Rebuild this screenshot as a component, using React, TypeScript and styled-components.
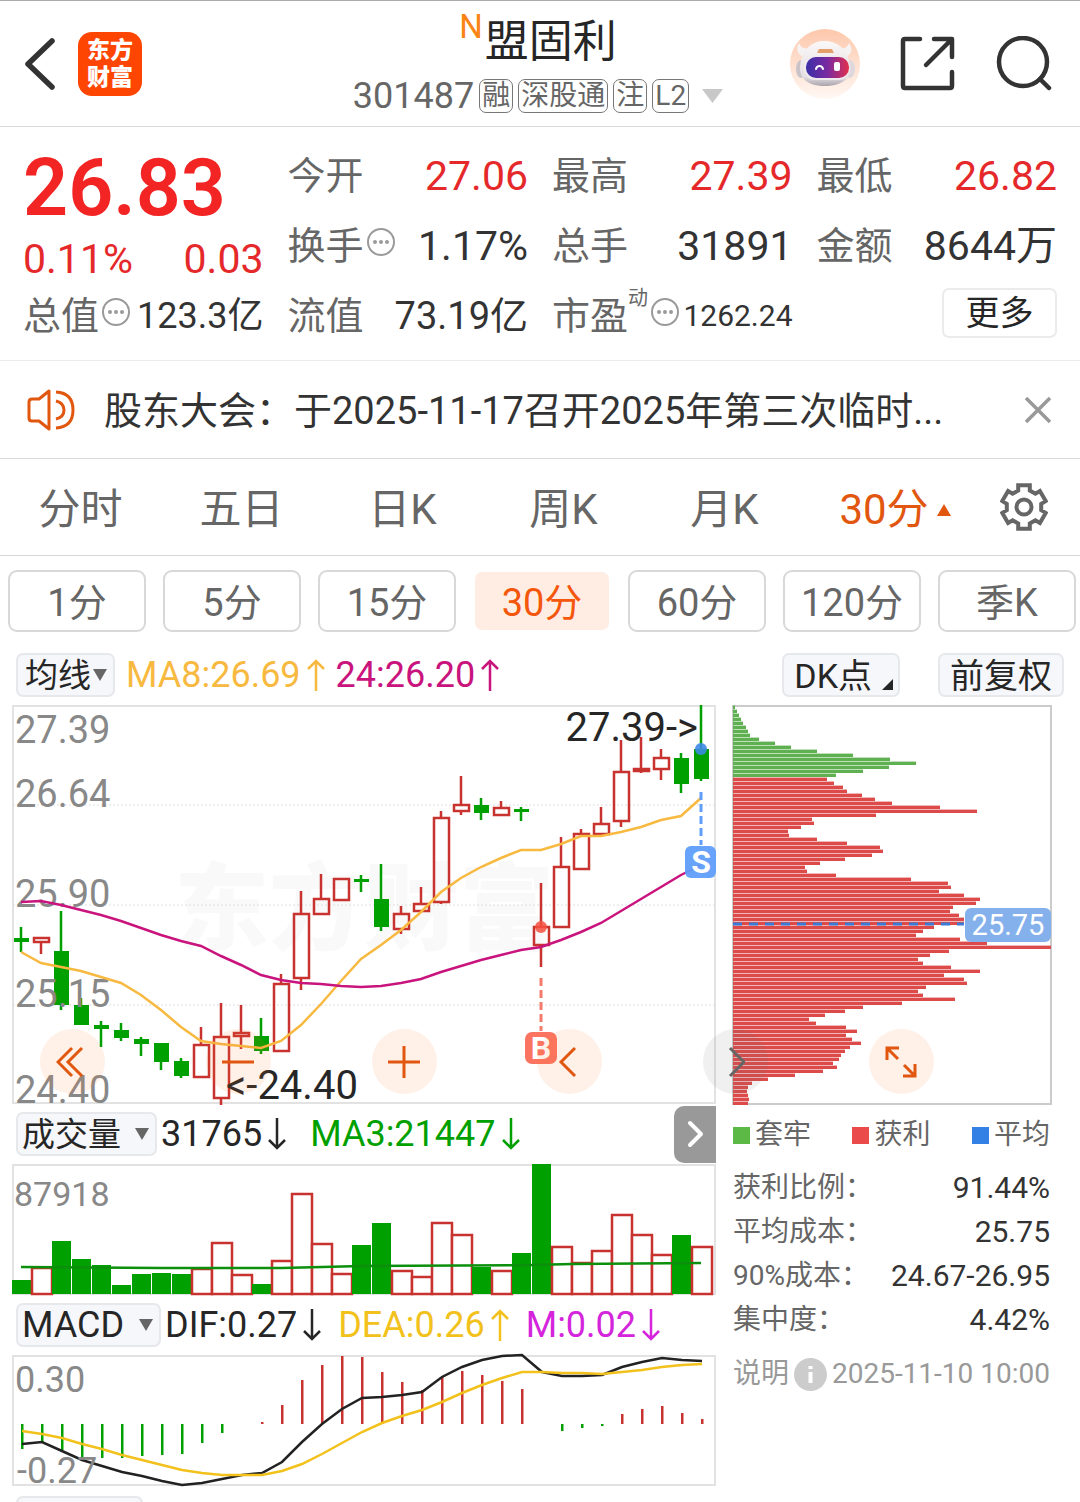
import React from "react";
import styled, { createGlobalStyle } from "styled-components";

const FONT = `Roboto, "Noto Sans CJK SC", sans-serif`;
const C = {
  ink: "#262626",
  text: "#333333",
  sub: "#666666",
  mute: "#999999",
  red: "#e5292b",
  orange: "#e2570f",
  up: "#c8322f",
  down: "#00a000",
  ma8: "#f8b941",
  ma24: "#c9137d",
  dea: "#f2c11c",
  macd: "#d424dc",
  frame: "#e2e2e2",
};

const GlobalStyle = createGlobalStyle`
  * { box-sizing: border-box; }
  body { margin: 0; background: #fff; font-family: ${FONT}; color: ${C.text}; }
  button, select { font: inherit; color: inherit; background: none; border: 0; padding: 0; margin: 0; cursor: pointer; }
  svg { display: block; flex: none; }
  h1, p, dl, dd, dt { margin: 0; font-weight: 400; }
`;

/* ---------- header ---------- */

const Header = styled.header`
  display: grid;
  grid-template-columns: 1fr auto 1fr;
  align-items: center;
  height: 127px;
  padding: 0 28px 0 24px;
  border-top: 1px solid #aaa;
  border-bottom: 1px solid #dadada;
`;
const HeaderSide = styled.div<{ $end?: boolean }>`
  display: flex;
  align-items: center;
  justify-content: ${(p) => (p.$end ? "flex-end" : "flex-start")};
  gap: ${(p) => (p.$end ? 40 : 22)}px;
`;
const IconButton = styled.button`
  display: flex;
  align-items: center;
  justify-content: center;
`;
const Logo = styled.a`
  display: grid;
  place-content: center;
  width: 64px;
  height: 64px;
  border-radius: 14px;
  background: #ff4502;
  color: #fff;
  font-size: 23px;
  font-weight: 900;
  line-height: 27px;
  text-decoration: none;
`;
const TitleBlock = styled.div`
  display: flex;
  flex-direction: column;
  align-items: center;
  padding-top: 8px;
`;
const StockName = styled.h1`
  display: flex;
  align-items: flex-start;
  gap: 2px;
  font-size: 44px;
  line-height: 56px;
  color: ${C.ink};
`;
const NewMark = styled.span`
  font-size: 33px;
  line-height: 26px;
  color: #fa8414;
`;
const CodeRow = styled.div`
  display: flex;
  align-items: center;
  gap: 5px;
  font-size: 36px;
  line-height: 52px;
  color: ${C.sub};
`;
const Tag = styled.span`
  padding: 0 2px;
  border: 1px solid #777;
  border-radius: 7px;
  font-size: 28px;
  line-height: 32px;
`;
const ExpandButton = styled(IconButton)`
  padding-left: 8px;
`;

/* ---------- quote ---------- */

const Quote = styled.section`
  display: grid;
  grid-template-columns: repeat(4, 1fr);
  grid-auto-rows: 70px;
  column-gap: 24px;
  padding: 14px 23px 9px;
  border-bottom: 1px solid #ececec;
`;
const PriceCell = styled.div`
  grid-row: span 2;
  padding-top: 1px;
  color: ${C.red};
`;
const Price = styled.div`
  font-size: 79px;
  font-weight: 600;
  line-height: 93px;
  color: #f22424;
`;
const Change = styled.div`
  display: flex;
  justify-content: space-between;
  font-size: 41px;
  line-height: 48px;
`;
const Field = styled.div`
  display: flex;
  align-items: center;
  justify-content: space-between;
  white-space: nowrap;
`;
const FieldLabel = styled.span`
  display: flex;
  align-items: center;
  font-size: 38px;
  line-height: 50px;
  color: ${C.sub};
`;
const Sup = styled.sup`
  align-self: flex-start;
  font-size: 20px;
  line-height: 14px;
`;
const FieldValue = styled.span<{ $red?: boolean; $size?: number }>`
  font-size: ${(p) => p.$size ?? 41}px;
  line-height: 50px;
  color: ${(p) => (p.$red ? C.red : C.text)};
`;
const MoreButton = styled.button`
  margin: 0 0 6px auto;
  width: 115px;
  height: 50px;
  border: 2px solid #eaebec;
  border-radius: 7px;
  font-size: 34px;
  line-height: 46px;
  color: ${C.ink};
`;

/* ---------- notice ---------- */

const Notice = styled.section`
  display: flex;
  align-items: center;
  height: 98px;
  padding: 0 28px 0 26px;
  border-bottom: 1px solid #dadada;
`;
const NoticeText = styled.p`
  flex: 1;
  min-width: 0;
  margin: 0 60px 0 28px;
  padding-top: 2px;
  overflow: hidden;
  white-space: nowrap;
  font-size: 38px;
  line-height: 50px;
`;

/* ---------- tabs ---------- */

const Tabs = styled.nav`
  display: grid;
  grid-template-columns: repeat(5, 161fr) 180fr 95fr;
  align-items: center;
  height: 97px;
  border-bottom: 1px solid #d6d6d6;
`;
const Tab = styled.button<{ $active?: boolean }>`
  display: flex;
  align-items: center;
  justify-content: center;
  gap: 8px;
  padding-top: 5px;
  font-size: 42px;
  line-height: 60px;
  color: ${(p) => (p.$active ? C.orange : C.sub)};
`;
const SettingsButton = styled(IconButton)`
  padding-right: 18px;
`;
const Periods = styled.div`
  display: grid;
  grid-template-columns: repeat(7, 1fr);
  gap: 17px;
  padding: 14px 4px 0 8px;
`;
const Period = styled.button<{ $active?: boolean }>`
  height: 62px;
  padding-top: 4px;
  border: 2px solid ${(p) => (p.$active ? "transparent" : "#d8d8d8")};
  border-radius: 9px;
  background: ${(p) => (p.$active ? "#ffede4" : "#fff")};
  background-clip: padding-box;
  font-size: 38px;
  line-height: 54px;
  color: ${(p) => (p.$active ? "#f4570b" : C.sub)};
`;

/* ---------- indicator bars ---------- */

const Toolbar = styled.div`
  display: flex;
  align-items: center;
  gap: 11px;
  height: 73px;
  padding: 13px 16px 0;
`;
const Spacer = styled.div`
  flex: 1;
`;
const Pill = styled.label<{ $gap?: number; $pad?: number }>`
  display: flex;
  align-items: center;
  gap: ${(p) => p.$gap ?? 2}px;
  height: 44px;
  padding: 0 6px 0 ${(p) => p.$pad ?? 4}px;
  border: 2px solid #e6e8eb;
  border-radius: 7px;
  background: #f6f7fa;
  color: ${C.ink};
`;
const PillSelect = styled.select<{ $latin?: boolean }>`
  appearance: none;
  outline: none;
  padding-top: ${(p) => (p.$latin ? 0 : 2)}px;
  font-size: ${(p) => (p.$latin ? 36 : 33)}px;
  line-height: 40px;
`;
const PillButton = styled.button<{ $corner?: boolean }>`
  display: flex;
  align-items: flex-end;
  gap: 10px;
  height: 44px;
  margin-left: 27px;
  padding: 0 ${(p) => (p.$corner ? 5 : 10)}px 0 10px;
  border: 2px solid #e6e8eb;
  border-radius: 7px;
  background: #f6f7fa;
  font-size: 34px;
  line-height: 38px;
  color: ${C.ink};
`;
const Corner = styled.span`
  margin-bottom: 5px;
  border-bottom: 11px solid ${C.ink};
  border-left: 11px solid transparent;
`;
const Reading = styled.span<{ $color: string }>`
  display: flex;
  align-items: center;
  gap: 6px;
  font-size: 36px;
  line-height: 44px;
  white-space: nowrap;
  color: ${(p) => p.$color};
`;
const PaneHeader = styled.div`
  display: flex;
  align-items: center;
  gap: 4px;
  height: 60px;
  padding-left: 4px;
`;
const Readings = styled.div<{ $gap: number }>`
  display: flex;
  flex: 1;
  gap: ${(p) => p.$gap}px;
`;
const CollapseButton = styled.button`
  display: flex;
  align-items: center;
  justify-content: center;
  width: 42px;
  height: 57px;
  border-radius: 10px 0 0 10px;
  background: #999;
`;

/* ---------- charts ---------- */

const ChartGrid = styled.section`
  position: relative;
  display: grid;
  grid-template-columns: 11fr 5fr;
  column-gap: 16px;
  padding: 0 28px 0 12px;
`;
const ChartSvg = styled.svg`
  width: 100%;
  height: auto;
  overflow: visible;
  font-family: ${FONT};
`;
const Floating = styled.div`
  position: absolute;
  right: 146px;
  bottom: 10px;
  left: 40px;
  display: flex;
  justify-content: space-between;
`;
const RoundButton = styled.button<{ $gray?: boolean }>`
  display: flex;
  align-items: center;
  justify-content: center;
  width: 65px;
  height: 65px;
  border-radius: 50%;
  background: ${(p) => (p.$gray ? "rgba(120,120,120,.11)" : "rgba(255,120,50,.11)")};
`;
const NextPane = styled.div`
  height: 16px;
  padding: 10px 0 0 4px;
  overflow: hidden;
`;
const NextPill = styled.div`
  width: 127px;
  height: 44px;
  border: 2px solid #e6e8eb;
  border-radius: 7px;
  background: #f6f7fa;
`;

/* ---------- cost statistics ---------- */

const Stats = styled.aside`
  padding: 13px 2px 0 1px;
`;
const Legend = styled.div`
  display: flex;
  justify-content: space-between;
  margin-bottom: 13px;
  font-size: 28px;
  line-height: 36px;
  color: ${C.sub};
`;
const LegendItem = styled.span<{ $color: string }>`
  display: flex;
  align-items: center;
  gap: 5px;
  &::before {
    content: "";
    width: 17px;
    height: 17px;
    background: ${(p) => p.$color};
  }
`;
const StatRow = styled.div`
  display: flex;
  justify-content: space-between;
  line-height: 44px;
  white-space: nowrap;
`;
const StatName = styled.dt`
  font-size: 28px;
  color: ${C.sub};
`;
const StatValue = styled.dd`
  font-size: 30px;
  color: ${C.text};
`;
const Note = styled.div`
  display: flex;
  align-items: center;
  justify-content: space-between;
  margin-top: 10px;
  font-size: 28px;
  line-height: 44px;
  white-space: nowrap;
  color: ${C.mute};
`;
const NoteHelp = styled.button`
  display: flex;
  align-items: center;
  gap: 5px;
`;

/* ---------- icons ---------- */

const MoreDots = () => (
  <svg width="32" height="42" viewBox="0 0 32 42">
    <circle cx="17" cy="17" r="13" fill="none" stroke="#9a9a9a" strokeWidth="2" />
    {[11, 17, 23].map((x) => (
      <circle key={x} cx={x} cy="17" r="2" fill="#9a9a9a" />
    ))}
  </svg>
);
const Caret = ({ up, w = 14, h = 12, color = "#666" }: { up?: boolean; w?: number; h?: number; color?: string }) => (
  <svg width={w} height={h} viewBox="0 0 14 12" preserveAspectRatio="none">
    <path d={up ? "M0 12L7 0L14 12Z" : "M0 0H14L7 12Z"} fill={color} />
  </svg>
);
const Arrow = ({ down }: { down?: boolean }) => (
  <svg width="18" height="32" viewBox="0 0 18 32" fill="none" stroke="currentColor" strokeWidth="2.5">
    <path d={down ? "M9 0V30M1 22L9 30L17 22" : "M9 32V2M1 10L9 2L17 10"} />
  </svg>
);
const Robot = () => (
  <svg width="70" height="70" viewBox="0 0 70 70">
    <defs>
      <linearGradient id="halo" x1="0" y1="0" x2="0" y2="1">
        <stop offset="0" stopColor="#fdc7ab" />
        <stop offset="1" stopColor="#fff8f4" />
      </linearGradient>
      <linearGradient id="visor" x1="0" y1="0" x2="1" y2="0">
        <stop offset="0" stopColor="#3a2fa8" />
        <stop offset=".5" stopColor="#7a2aa0" />
        <stop offset="1" stopColor="#e2304e" />
      </linearGradient>
      <linearGradient id="shell" x1="0" y1="0" x2="0" y2="1">
        <stop offset="0" stopColor="#fbf8f8" />
        <stop offset=".8" stopColor="#e4dee2" />
        <stop offset="1" stopColor="#a9a3ad" />
      </linearGradient>
    </defs>
    <circle cx="35" cy="35" r="35" fill="url(#halo)" />
    <path d="M9 14C5 20 8 27 15 28L23 18C15 21 11 19 9 14ZM59 14C64 20 61 27 54 28L46 18C54 21 57 19 59 14Z" fill="#f7f2f2" />
    <ellipse cx="11" cy="40" rx="5" ry="9" fill="#c9c3c8" />
    <ellipse cx="60" cy="40" rx="5" ry="9" fill="#ded8dc" />
    <path d="M34 12C48 12 56 20 59 32C64 47 54 57 35 57C15 57 7 47 11 32C14 20 22 12 34 12Z" fill="url(#shell)" />
    <path d="M29 20H42L44 24H27Z" fill="#e4a06a" />
    <rect x="14" y="27" width="46" height="24" rx="11" fill="#efe9ed" />
    <rect x="16" y="28" width="43" height="21" rx="10" fill="url(#visor)" />
    <path d="M26 40C27 36 32 36 33 40" fill="none" stroke="#fff" strokeWidth="2" strokeLinecap="round" />
    <rect x="44" y="33" width="6" height="9" rx="2" fill="#fff" />
  </svg>
);
const gearPath = (() => {
  const pts: string[] = [];
  for (let k = 0; k < 6; k++) {
    const a = (k * Math.PI) / 3 - Math.PI / 2;
    [[-0.26, 22.5], [0.26, 22.5], [0.34, 17.5], [0.71, 17.5]].forEach(([d, r]) =>
      pts.push(`${(24 + r * Math.cos(a + d)).toFixed(1)} ${(24 + r * Math.sin(a + d)).toFixed(1)}`)
    );
  }
  return "M" + pts.join("L") + "Z";
})();

/* ---------- data ---------- */

// [up, high, body top, body bottom, low]
const candles: [number, number, number, number, number][] = [
  [0, 222, 233, 237, 247], [1, 232, 232, 237, 249], [0, 206, 246, 300, 305], [0, 293, 300, 320, 320],
  [0, 316, 320, 324, 342], [0, 318, 325, 333, 336], [0, 332, 334, 339, 351], [0, 338, 338, 357, 365],
  [0, 353, 356, 371, 373], [1, 322, 339, 372, 373], [1, 298, 331, 393, 400], [1, 300, 327, 331, 344],
  [0, 313, 331, 346, 349], [1, 269, 278, 346, 346], [1, 186, 208, 273, 285], [1, 169, 193, 209, 209],
  [1, 173, 173, 195, 195], [0, 170, 174, 177, 187], [0, 159, 194, 222, 226], [1, 201, 208, 224, 229],
  [1, 182, 198, 206, 206], [1, 106, 112, 197, 199], [1, 71, 99, 106, 110], [0, 93, 100, 108, 115],
  [1, 96, 102, 110, 110], [0, 102, 104, 107, 116], [1, 178, 221, 240, 262], [1, 132, 161, 222, 222],
  [1, 124, 128, 164, 164], [1, 102, 118, 129, 129], [1, 35, 66, 116, 122], [1, 32, 63, 66, 68],
  [1, 44, 52, 64, 75], [0, 48, 53, 79, 88], [0, 0, 44, 74, 76],
];
const ma8 = [247, 258, 262, 266, 272, 278, 290, 305, 322, 336, 339, 341, 343, 336, 320, 299, 276, 254, 240, 225, 207, 187, 173, 162, 153, 145, 145, 139, 131, 131, 127, 122, 115, 111, 93];
const ma24 = [197, 196, 200, 205, 210, 216, 223, 230, 236, 241, 251, 260, 270, 275, 278, 279, 281, 282, 281, 278, 274, 267, 261, 255, 250, 245, 242, 235, 227, 218, 206, 194, 182, 170, 160];
const volume: [number, number][] = [
  [0, 116], [1, 104], [0, 77], [0, 95], [0, 101], [0, 121], [0, 110], [0, 109], [0, 110], [1, 105], [1, 79], [1, 111],
  [0, 120], [1, 97], [1, 30], [1, 80], [1, 110], [0, 81], [0, 59], [1, 107], [1, 113], [1, 59], [1, 71], [0, 103],
  [1, 107], [0, 89], [0, 0], [1, 83], [1, 99], [1, 87], [1, 51], [1, 71], [1, 91], [0, 71], [1, 83],
];
const hist = [94, 87, 95, 102, 103, 103, 101, 100, 99, 88, 78, 69, 67, 50, 25, 10, 1, 2, 17, 27, 35, 22, 16, 20, 26, 34, 69, 76, 73, 71, 59, 54, 51, 58, 64];
const dif = [89, 87, 96, 105, 111, 117, 121, 126, 130, 128, 124, 120, 118, 107, 87, 69, 54, 43, 42, 40, 37, 22, 12, 5, 1, 0, 17, 21, 21, 20, 12, 7, 3, 5, 6];
const dea = [76, 79, 83, 89, 94, 100, 105, 110, 115, 118, 120, 120, 120, 116, 109, 99, 88, 77, 68, 61, 55, 47, 38, 30, 23, 17, 17, 18, 18, 19, 17, 15, 12, 10, 9];
const trapped = [2, 4, 6, 8, 10, 13, 15, 17, 26, 42, 58, 84, 120, 157, 183, 156, 130, 103];
const profit = [
  94, 101, 110, 114, 129, 142, 159, 207, 244, 143, 79, 81, 68, 55, 56, 84, 114, 147, 150, 139, 112, 87, 72, 74, 103, 178,
  215, 218, 206, 231, 247, 243, 220, 217, 226, 231, 231, 201, 190, 183, 227, 254, 318, 216, 197, 185, 190, 218, 247, 211,
  231, 234, 193, 185, 190, 222, 169, 130, 112, 92, 76, 83, 113, 124, 113, 119, 128, 117, 112, 108, 106, 100, 104, 90, 62,
  35, 19, 15, 14, 15, 16, 15,
];
const line = (ys: number[], x0 = 9) => ys.map((y, i) => `${x0 + i * 20},${y}`).join(" ");

/* ---------- chart panes ---------- */

const Frame = ({ h }: { h: number }) => (
  <rect x="1" y="1" width="702" height={h - 2} fill="none" stroke={C.frame} strokeWidth="2" />
);

const CandleChart = () => (
  <ChartSvg viewBox="0 0 704 399" role="img" aria-label="30分钟K线图">
    <text x="162" y="238" fontSize="95" fontWeight="900" fill="#f9f9f9">东方财富</text>
    <Frame h={399} />
    {[100, 200, 300].map((y) => (
      <line key={y} x1="1" x2="703" y1={y} y2={y} stroke="#dedede" strokeDasharray="2 2" />
    ))}
    {candles.map(([up, hi, top, bottom, lo], i) => {
      const x = 9 + i * 20;
      const color = up ? C.up : C.down;
      return (
        <g key={i} stroke={color} strokeWidth="2.5">
          <path d={`M${x} ${hi}V${top}M${x} ${bottom}V${lo}`} />
          {up ? (
            <rect x={x - 7} y={top + 1} width="15" height={Math.max(1, bottom - top - 1)} fill="none" />
          ) : (
            <rect x={x - 7} y={top} width="15" height={bottom - top} fill={color} stroke="none" />
          )}
        </g>
      );
    })}
    <g fontSize="38" fill="#888">
      <text x="3" y="38">27.39</text>
      <text x="3" y="102">26.64</text>
      <text x="3" y="202">25.90</text>
      <text x="3" y="302">25.15</text>
      <text x="3" y="398">24.40</text>
    </g>
    <polyline points={line(ma8)} fill="none" stroke={C.ma8} strokeWidth="2.5" />
    <polyline points={line(ma24)} fill="none" stroke={C.ma24} strokeWidth="2.5" />
    <g fontSize="40" fill={C.ink}>
      <text x="686" y="36" textAnchor="end">27.39-&gt;</text>
      <text x="214" y="394">&lt;-24.40</text>
    </g>
    <g fontSize="32" fontWeight="700" textAnchor="middle">
      <circle cx="529" cy="222" r="6" fill="#f5503f" opacity=".85" />
      <path d="M529 273V326" stroke="#f47c6c" strokeWidth="3" strokeDasharray="8 4" />
      <rect x="513" y="327" width="32" height="32" rx="7" fill="#fb7462" />
      <text x="529" y="354" fill="#fff">B</text>
      <circle cx="689" cy="44" r="6" fill="#3d8ae6" opacity=".9" />
      <path d="M689 87V140" stroke="#609efb" strokeWidth="3" strokeDasharray="8 4" />
      <rect x="673" y="141" width="31" height="32" rx="6" fill="#5f9dfb" opacity=".95" />
      <text x="689" y="168" fill="#fff">S</text>
    </g>
  </ChartSvg>
);

const CostChart = () => (
  <ChartSvg viewBox="0 0 320 399" role="img" aria-label="筹码分布">
    <rect x="1" y="1" width="318" height="398" fill="none" stroke="#cbcbcb" strokeWidth="2" />
    {[...trapped, ...profit].map((w, i) => {
      const color = i < trapped.length ? "#5fb050" : "#dc4a4a";
      return (
        <g key={i} fill={color}>
          <rect x="1" y={i * 4} width={w} height="4" opacity=".4" />
          <rect x="1" y={i * 4 + 1} width={w} height="3" />
        </g>
      );
    })}
    <line x1="1" x2="232" y1="219" y2="219" stroke="#3a7bd6" strokeWidth="3" strokeDasharray="9 7" />
    <rect x="233" y="203" width="86" height="34" rx="6" fill="#84b1ec" />
    <text x="276" y="230" fontSize="29" textAnchor="middle" fill="#fff">25.75</text>
  </ChartSvg>
);

const VolumeChart = () => (
  <ChartSvg viewBox="0 0 704 131" role="img" aria-label="成交量">
    <Frame h={131} />
    <text x="2" y="42" fontSize="34" fill="#888">87918</text>
    {volume.map(([up, top], i) =>
      up ? (
        <rect key={i} x={i * 20} y={top} width="20" height={130 - top} fill="#fff" stroke={C.up} strokeWidth="2.5" />
      ) : (
        <rect key={i} x={i * 20} y={top} width="19" height={130 - top} fill={C.down} />
      )
    )}
    <polyline points="9,103 150,104 270,104 350,102 520,101 560,100 689,99" fill="none" stroke="#0c8f0c" strokeWidth="2.5" />
  </ChartSvg>
);

const MacdChart = () => (
  <ChartSvg viewBox="0 0 704 131" role="img" aria-label="MACD">
    <Frame h={131} />
    {hist.map((y, i) => (
      <rect key={i} x={9 + i * 20} y={Math.min(y, 69)} width="2.5" height={Math.abs(69 - y)} fill={y > 69 ? C.down : C.up} />
    ))}
    <polyline points={line(dif, 10)} fill="none" stroke="#222" strokeWidth="2.5" />
    <polyline points={line(dea, 10)} fill="none" stroke={C.dea} strokeWidth="2.5" />
    <g fontSize="36" fill="#888">
      <text x="3" y="37">0.30</text>
      <text x="5" y="128">-0.27</text>
    </g>
  </ChartSvg>
);

/* ---------- page ---------- */

const stroke = { fill: "none", stroke: C.orange, strokeWidth: 3 };

export default function App() {
  return (
    <main>
      <GlobalStyle />
      <Header>
        <HeaderSide>
          <IconButton aria-label="返回">
            <svg width="32" height="54" viewBox="0 0 32 54" fill="none" stroke="#333" strokeWidth="5.5" strokeLinecap="round" strokeLinejoin="round">
              <path d="M28 4L4 27L28 50" />
            </svg>
          </IconButton>
          <Logo href="#" aria-label="东方财富">
            <span>东方</span>
            <span>财富</span>
          </Logo>
        </HeaderSide>
        <TitleBlock>
          <StockName>
            <NewMark>N</NewMark>盟固利
          </StockName>
          <CodeRow>
            301487
            <Tag>融</Tag>
            <Tag>深股通</Tag>
            <Tag>注</Tag>
            <Tag>L2</Tag>
            <ExpandButton aria-label="展开">
              <Caret w={21} h={14} color="#c8c8c8" />
            </ExpandButton>
          </CodeRow>
        </TitleBlock>
        <HeaderSide $end>
          <IconButton aria-label="智能助手"><Robot /></IconButton>
          <IconButton aria-label="分享">
            <svg width="56" height="56" viewBox="0 0 56 56" fill="none" stroke="#333" strokeWidth="4.5" strokeLinecap="round" strokeLinejoin="round">
              <path d="M20 3H5Q3 3 3 5V50Q3 52 5 52H50Q52 52 52 50V36M34 3H52V21M51 4L26 29" />
            </svg>
          </IconButton>
          <IconButton aria-label="搜索">
            <svg width="56" height="56" viewBox="0 0 56 56" fill="none" stroke="#333" strokeWidth="4.5" strokeLinecap="round">
              <circle cx="27" cy="26" r="24" />
              <path d="M44 43L53 52" />
            </svg>
          </IconButton>
        </HeaderSide>
      </Header>

      <Quote>
        <PriceCell>
          <Price>26.83</Price>
          <Change><span>0.11%</span><span>0.03</span></Change>
        </PriceCell>
        <Field><FieldLabel>今开</FieldLabel><FieldValue $red>27.06</FieldValue></Field>
        <Field><FieldLabel>最高</FieldLabel><FieldValue $red>27.39</FieldValue></Field>
        <Field><FieldLabel>最低</FieldLabel><FieldValue $red>26.82</FieldValue></Field>
        <Field><FieldLabel>换手<MoreDots /></FieldLabel><FieldValue>1.17%</FieldValue></Field>
        <Field><FieldLabel>总手</FieldLabel><FieldValue>31891</FieldValue></Field>
        <Field><FieldLabel>金额</FieldLabel><FieldValue>8644万</FieldValue></Field>
        <Field><FieldLabel>总值<MoreDots /></FieldLabel><FieldValue $size={36}>123.3亿</FieldValue></Field>
        <Field><FieldLabel>流值</FieldLabel><FieldValue $size={38}>73.19亿</FieldValue></Field>
        <Field><FieldLabel>市盈<Sup>动</Sup><MoreDots /></FieldLabel><FieldValue $size={30}>1262.24</FieldValue></Field>
        <Field><MoreButton>更多</MoreButton></Field>
      </Quote>

      <Notice>
        <svg width="50" height="42" viewBox="0 0 50 42" fill="none" stroke={C.orange} strokeWidth="3">
          <path d="M23 2V40L13 32H6Q3 32 3 29V13Q3 10 6 10H13Z" strokeLinejoin="round" />
          <path d="M30 12Q38 14 38 21Q38 28 30 30M30 3Q47 4 47 21Q47 38 30 39" />
        </svg>
        <NoticeText>股东大会：于2025-11-17召开2025年第三次临时...</NoticeText>
        <IconButton aria-label="关闭">
          <svg width="28" height="28" viewBox="0 0 28 28" fill="none" stroke="#999" strokeWidth="3.5">
            <path d="M2 2L26 26M26 2L2 26" />
          </svg>
        </IconButton>
      </Notice>

      <Tabs>
        {["分时", "五日", "日K", "周K", "月K"].map((t) => <Tab key={t}>{t}</Tab>)}
        <Tab $active>30分<Caret up color={C.orange} /></Tab>
        <SettingsButton aria-label="设置">
          <svg width="48" height="48" viewBox="0 0 48 48" fill="none" stroke="#666" strokeWidth="4">
            <path d={gearPath} />
            <circle cx="24" cy="24" r="7.500" />
          </svg>
        </SettingsButton>
      </Tabs>
      <Periods>
        {["1分", "5分", "15分", "30分", "60分", "120分", "季K"].map((t) => (
          <Period key={t} $active={t === "30分"}>{t}</Period>
        ))}
      </Periods>

      <Toolbar>
        <Pill $pad={7}>
          <PillSelect aria-label="主图指标"><option>均线</option></PillSelect>
          <Caret />
        </Pill>
        <Reading $color={C.ma8}>MA8:26.69<Arrow /></Reading>
        <Reading $color={C.ma24}>24:26.20<Arrow /></Reading>
        <Spacer />
        <PillButton $corner>DK点<Corner /></PillButton>
        <PillButton>前复权</PillButton>
      </Toolbar>

      <ChartGrid>
        <CandleChart />
        <CostChart />
        <Floating>
          <RoundButton aria-label="最左">
            <svg width="34" height="32" viewBox="0 0 34 32" {...stroke}><path d="M16 2L2 16L16 30M26 2L12 16L26 30" /></svg>
          </RoundButton>
          <RoundButton aria-label="缩小">
            <svg width="32" height="32" viewBox="0 0 32 32" {...stroke}><path d="M0 16H32" /></svg>
          </RoundButton>
          <RoundButton aria-label="放大">
            <svg width="32" height="32" viewBox="0 0 32 32" {...stroke}><path d="M0 16H32M16 0V32" /></svg>
          </RoundButton>
          <RoundButton aria-label="向左">
            <svg width="24" height="32" viewBox="0 0 24 32" {...stroke}><path d="M17 2L3 16L17 30" /></svg>
          </RoundButton>
          <RoundButton aria-label="向右" $gray>
            <svg width="18" height="32" viewBox="0 0 18 32" {...stroke} stroke="#666"><path d="M3 2L17 16L3 30" /></svg>
          </RoundButton>
          <RoundButton aria-label="全屏">
            <svg width="32" height="32" viewBox="0 0 32 32" {...stroke}>
              <path d="M2 14V2H14M2 2L13 13M30 18V30H18M30 30L19 19" />
            </svg>
          </RoundButton>
        </Floating>
      </ChartGrid>

      <ChartGrid>
        <div>
          <PaneHeader>
            <Pill $gap={14}>
              <PillSelect aria-label="副图指标一"><option>成交量</option></PillSelect>
              <Caret />
            </Pill>
            <Readings $gap={24}>
              <Reading $color={C.ink}>31765<Arrow down /></Reading>
              <Reading $color={C.down}>MA3:21447<Arrow down /></Reading>
            </Readings>
            <CollapseButton aria-label="收起筹码">
              <svg width="18" height="28" viewBox="0 0 18 28" fill="none" stroke="#fff" strokeWidth="4" strokeLinecap="round" strokeLinejoin="round">
                <path d="M4 3L15 14L4 25" />
              </svg>
            </CollapseButton>
          </PaneHeader>
          <VolumeChart />
          <PaneHeader>
            <Pill $gap={14}>
              <PillSelect $latin aria-label="副图指标二"><option>MACD</option></PillSelect>
              <Caret />
            </Pill>
            <Readings $gap={17}>
              <Reading $color={C.ink}>DIF:0.27<Arrow down /></Reading>
              <Reading $color={C.dea}>DEA:0.26<Arrow /></Reading>
              <Reading $color={C.macd}>M:0.02<Arrow down /></Reading>
            </Readings>
          </PaneHeader>
          <MacdChart />
          <NextPane><NextPill /></NextPane>
        </div>
        <Stats>
          <Legend>
            <LegendItem $color="#5cb946">套牢</LegendItem>
            <LegendItem $color="#ea4a4a">获利</LegendItem>
            <LegendItem $color="#3381e5">平均</LegendItem>
          </Legend>
          <dl>
            <StatRow><StatName>获利比例：</StatName><StatValue>91.44%</StatValue></StatRow>
            <StatRow><StatName>平均成本：</StatName><StatValue>25.75</StatValue></StatRow>
            <StatRow><StatName>90%成本：</StatName><StatValue>24.67-26.95</StatValue></StatRow>
            <StatRow><StatName>集中度：</StatName><StatValue>4.42%</StatValue></StatRow>
          </dl>
          <Note>
            <NoteHelp>
              说明
              <svg width="33" height="33" viewBox="0 0 33 33">
                <circle cx="16.5" cy="16.5" r="16.5" fill="#ccc" />
                <path d="M16.500 14V25M16.500 8V11" stroke="#fff" strokeWidth="4" />
              </svg>
            </NoteHelp>
            <time dateTime="2025-11-10T10:00">2025-11-10 10:00</time>
          </Note>
        </Stats>
      </ChartGrid>
    </main>
  );
}
